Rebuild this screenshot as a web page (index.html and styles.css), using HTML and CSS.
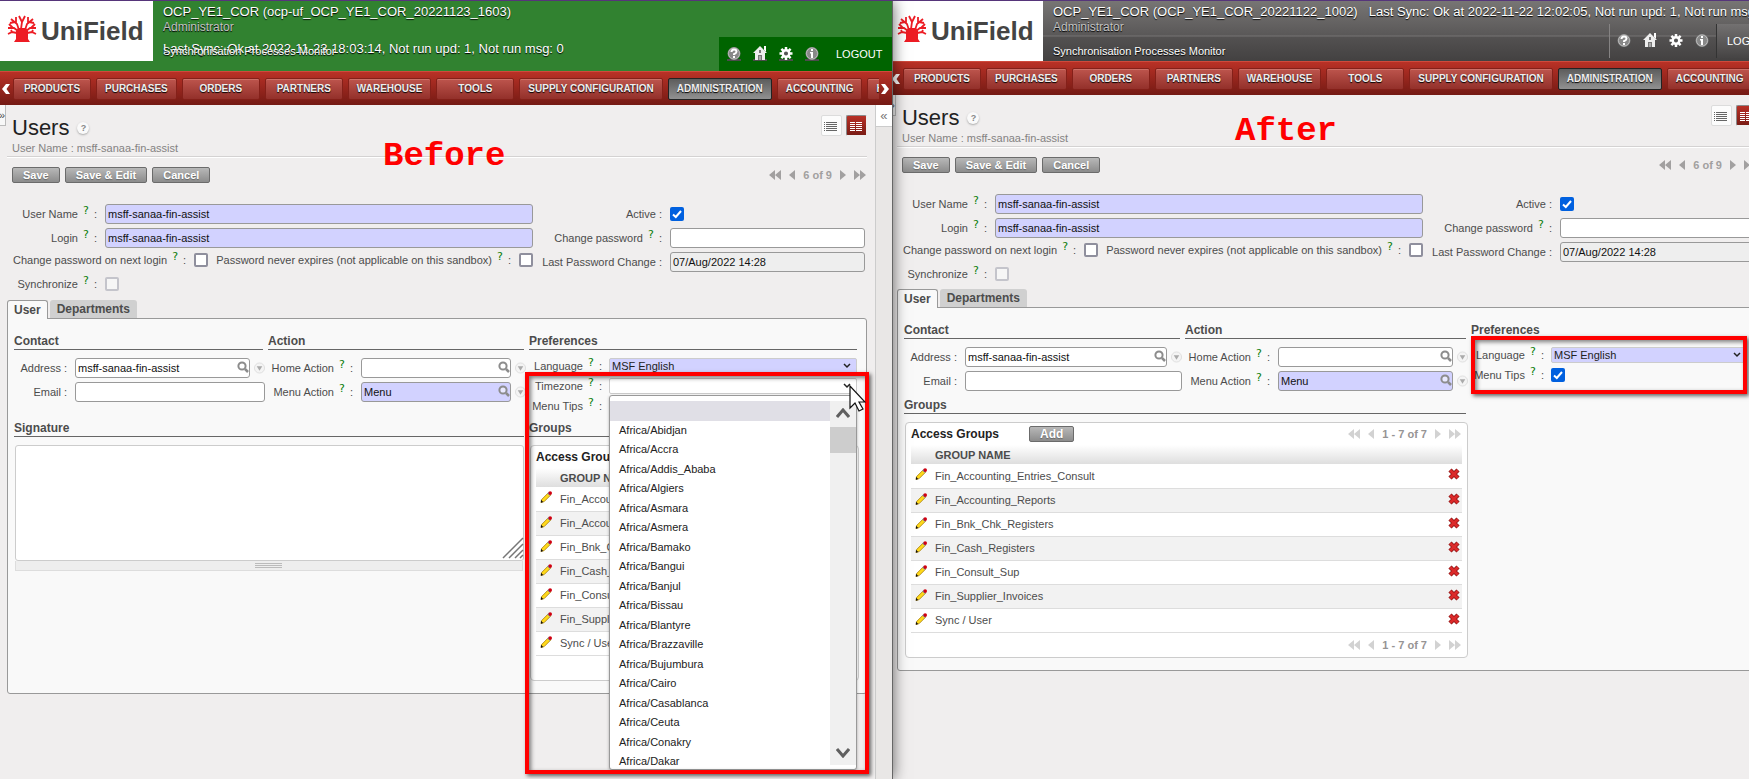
FILE: index.html
```html
<!DOCTYPE html>
<html lang="en">
<head>
    <meta charset="UTF-8">
    <meta name="viewport" content="width=device-width, initial-scale=1.0">
    <title>UniField - Users</title>
    <link rel="stylesheet" href="styles.css">
</head>
<body>
    <!-- shared icons -->
    <svg class="icon-defs" aria-hidden="true">
        <symbol id="tree" viewBox="0 0 30 27">
            <path fill="#ed1c24" d="M9 24 L9 16 L11 13 L19 13 L21 16 L21 24 L23 27 L7 27Z"/>
            <g fill="none" stroke="#ed1c24" stroke-width="1.800">
                <path d="M11 16 L7 13 L1 13 M6 13 L2 9 M12 15 L10 9 L4 4 M8 7 L3 8 M9 8 L9 2 M14 14 L15 7 L12 1 M15 7 L18 1 M18 15 L20 9 L26 4 M22 7 L27 8 M21 8 L21 2 M19 16 L23 13 L29 13 M24 13 L28 9 M10 18 L5 17 L1 19 M5 17 L4 15 M20 18 L25 17 L29 19 M25 17 L26 15"/>
            </g>
        </symbol>
        <symbol id="ico-help" viewBox="0 0 16 16">
            <rect x="1" y="13" width="14" height="2" fill="#4c4c4c"/>
            <circle cx="8" cy="7.500" r="6.500" fill="#888"/>
            <circle cx="8" cy="7.500" r="5.500" fill="none" stroke="#bbb"/>
            <path d="M5.500 6 Q5.500 3.500 8 3.500 T10.500 5.800 Q10.500 7.200 8 8.200 V9" fill="none" stroke="#fff" stroke-width="2"/>
            <rect x="7" y="10" width="2" height="2" fill="#fff"/>
        </symbol>
        <symbol id="ico-home" viewBox="0 0 16 16">
            <rect x="1" y="13" width="14" height="2" fill="#4c4c4c"/>
            <path d="M1 7 L8 0 L15 7 L13 7 L13 14 L3 14 L3 7Z" fill="#eee"/>
            <path d="M12 0 H14 V6 L12 4Z" fill="#fff"/>
            <path d="M7 4 H9 V7 H7Z M6 9 H10 V14 H6Z" fill="#777"/>
            <path d="M8 10 V14" stroke="#ddd" stroke-width="1"/>
        </symbol>
        <symbol id="ico-gear" viewBox="0 0 16 16">
            <rect x="1" y="13" width="14" height="2" fill="#4c4c4c"/>
            <path d="M8 1 V14 M1.500 7.500 H14.500 M3.400 2.900 L12.600 12.100 M12.600 2.900 L3.400 12.100" stroke="#fff" stroke-width="2.500"/>
            <circle cx="8" cy="7.500" r="3.300" fill="#555" stroke="#fff" stroke-width="2.500"/>
        </symbol>
        <symbol id="ico-info" viewBox="0 0 16 16">
            <rect x="1" y="13" width="14" height="2" fill="#4c4c4c"/>
            <circle cx="8" cy="7.500" r="6.500" fill="#888"/>
            <circle cx="8" cy="7.500" r="5.500" fill="none" stroke="#bbb"/>
            <path d="M7 3 H9 V5 H7Z M6 6 H9 V12 H7 V7.500 H6Z" fill="#fff"/>
        </symbol>
        <symbol id="ico-list" viewBox="0 0 14 12">
            <path d="M0 2.500 H1 M0 4.500 H1 M0 6.500 H1 M0 8.500 H1 M0 10.500 H1 M2 2.500 H13 M2 4.500 H13 M2 6.500 H13 M2 8.500 H13 M2 10.500 H13" stroke="currentColor"/>
        </symbol>
        <symbol id="ico-form" viewBox="0 0 14 12">
            <path d="M1 2.500 H6 M1 4.500 H6 M1 6.500 H6 M1 8.500 H6 M1 10.500 H6 M7 2.500 H13 M7 4.500 H13 M7 6.500 H13 M7 8.500 H13 M7 10.500 H13" stroke="currentColor"/>
        </symbol>
        <symbol id="ico-first" viewBox="0 0 12 10">
            <path d="M6 0 V10 L0 5Z M12 0 V10 L6 5Z" fill="currentColor"/>
        </symbol>
        <symbol id="ico-prev" viewBox="0 0 6 10">
            <path d="M6 0 V10 L0 5Z" fill="currentColor"/>
        </symbol>
        <symbol id="ico-next" viewBox="0 0 6 10">
            <path d="M0 0 V10 L6 5Z" fill="currentColor"/>
        </symbol>
        <symbol id="ico-last" viewBox="0 0 12 10">
            <path d="M0 0 V10 L6 5Z M6 0 V10 L12 5Z" fill="currentColor"/>
        </symbol>
        <symbol id="ico-search" viewBox="0 0 12 12">
            <circle cx="5" cy="5" r="3.600" fill="#fff" fill-opacity=".5" stroke="#8c8c8c" stroke-width="2"/>
            <path d="M8 8 L11 11" stroke="#8c8c8c" stroke-width="2.500"/>
        </symbol>
        <symbol id="ico-open" viewBox="0 0 12 12">
            <circle cx="6" cy="6" r="5.500" fill="#f4f4f4" stroke="#ddd"/>
            <path d="M3 4 H9 L6 9Z" fill="#aaa"/>
        </symbol>
        <symbol id="ico-edit" viewBox="0 0 13 13">
            <path d="M2 9 L9 2 L11.500 4.500 L4.500 11.500 L1 12.500Z" fill="#ffd91a" stroke="#a07400" stroke-width=".8"/>
            <path d="M1 9.500 L3.500 12 L1 12.800Z" fill="#111"/>
            <path d="M8.500 2 L11 4.500" stroke="#5aa5e8" stroke-width="1.500"/>
            <circle cx="11" cy="2.200" r="2" fill="#d00010"/>
        </symbol>
        <symbol id="ico-delete" viewBox="0 0 12 12">
            <path d="M2 2 L10 10 M10 2 L2 10" stroke="#8e1515" stroke-width="4.500"/>
            <path d="M2.200 2.200 L9.800 9.800 M9.800 2.200 L2.200 9.800" stroke="#dc2a2a" stroke-width="2.800"/>
        </symbol>
        <symbol id="ico-left" viewBox="0 0 8 10">
            <path d="M0 5 L4 0 H8 L4.500 5 L8 10 H4Z" fill="#fff"/>
        </symbol>
        <symbol id="ico-right" viewBox="0 0 8 10">
            <path d="M8 5 L4 0 H0 L3.500 5 L0 10 H4Z" fill="#fff"/>
        </symbol>
    </svg>

    <!-- Before -->
    <div class="window window-before">
        <header class="header header-green">
            <a class="logo" href="#"><svg class="logo-tree"><use href="#tree"/></svg>UniField</a>
            <div class="header-info">
                <div class="db-line"><span>OCP_YE1_COR (ocp-uf_OCP_YE1_COR_20221123_1603)</span></div>
                <div class="role">Administrator</div>
                <div class="sync-line">
                    <span class="last-sync">Last Sync: Ok at 2022-11-23 18:03:14, Not run upd: 1, Not run msg: 0</span>
                    <a class="monitor" href="#">Synchronisation Processes Monitor</a>
                </div>
            </div>
            <div class="shortcuts">
                <a href="#" aria-label="Help"><svg><use href="#ico-help"/></svg></a>
                <a href="#" aria-label="Home"><svg><use href="#ico-home"/></svg></a>
                <a href="#" aria-label="Preferences"><svg><use href="#ico-gear"/></svg></a>
                <a href="#" aria-label="About"><svg><use href="#ico-info"/></svg></a>
                <a class="logout" href="#">LOGOUT</a>
            </div>
        </header>
        <nav class="menu">
            <button class="menu-arrow" aria-label="Scroll left"><svg><use href="#ico-left"/></svg></button>
            <div class="menu-items">
                <a href="#">PRODUCTS</a>
                <a href="#">PURCHASES</a>
                <a href="#">ORDERS</a>
                <a href="#">PARTNERS</a>
                <a href="#">WAREHOUSE</a>
                <a href="#">TOOLS</a>
                <a href="#">SUPPLY CONFIGURATION</a>
                <a class="active" href="#">ADMINISTRATION</a>
                <a href="#">ACCOUNTING</a>
                <a href="#">HUMAN RESOURCES</a>
            </div>
            <button class="menu-arrow" aria-label="Scroll right"><svg><use href="#ico-right"/></svg></button>
        </nav>
        <div class="page">
            <button class="toggle-left" aria-label="Open menu">»</button>
            <main class="content">
                <div class="title-bar">
                    <div>
                        <h1>Users <a class="title-help" href="#">?</a></h1>
                        <p class="subtitle">User Name : msff-sanaa-fin-assist</p>
                    </div>
                    <div class="views">
                        <button class="view" aria-label="List view"><svg><use href="#ico-list"/></svg></button>
                        <button class="view active" aria-label="Form view"><svg><use href="#ico-form"/></svg></button>
                    </div>
                </div>
                <div class="toolbar">
                    <button class="btn">Save</button>
                    <button class="btn">Save &amp; Edit</button>
                    <button class="btn">Cancel</button>
                    <div class="pager">
                        <svg class="wide"><use href="#ico-first"/></svg><svg><use href="#ico-prev"/></svg>
                        <span>6 of 9</span>
                        <svg><use href="#ico-next"/></svg><svg class="wide"><use href="#ico-last"/></svg>
                    </div>
                </div>
                <div class="user-form">
                    <div class="form-main">
                        <div class="row"><label for="b-name">User Name <sup>?</sup> :</label><input class="text required" id="b-name" type="text" value="msff-sanaa-fin-assist"></div>
                        <div class="row"><label for="b-login">Login <sup>?</sup> :</label><input class="text required" id="b-login" type="text" value="msff-sanaa-fin-assist"></div>
                        <div class="row row-checks">
                            <label for="b-next">Change password on next login <sup>?</sup> :</label><input id="b-next" type="checkbox">
                            <label for="b-never">Password never expires (not applicable on this sandbox) <sup>?</sup> :</label><input id="b-never" type="checkbox">
                        </div>
                        <div class="row row-sync"><label for="b-sync">Synchronize <sup>?</sup> :</label><input id="b-sync" type="checkbox" disabled></div>
                    </div>
                    <div class="form-side">
                        <div class="row"><label for="b-active">Active :</label><input id="b-active" type="checkbox" checked></div>
                        <div class="row"><label for="b-pass">Change password <sup>?</sup> :</label><input class="text" id="b-pass" type="password"></div>
                        <div class="row"><label for="b-last">Last Password Change :</label><input class="text readonly" id="b-last" type="text" value="07/Aug/2022 14:28" readonly></div>
                    </div>
                </div>
                <div class="tabs">
                    <button class="tab active">User</button>
                    <button class="tab">Departments</button>
                </div>
                <div class="panel">
                    <section class="contact">
                        <h2>Contact</h2>
                        <div class="row"><label for="b-address">Address :</label><span class="lookup"><input class="text" id="b-address" type="text" value="msff-sanaa-fin-assist"><svg class="search"><use href="#ico-search"/></svg></span><svg class="open"><use href="#ico-open"/></svg></div>
                        <div class="row"><label for="b-email">Email :</label><input class="text" id="b-email" type="text"></div>
                    </section>
                    <section class="action">
                        <h2>Action</h2>
                        <div class="row"><label for="b-home">Home Action <sup>?</sup> :</label><span class="lookup"><input class="text" id="b-home" type="text"><svg class="search"><use href="#ico-search"/></svg></span><svg class="open"><use href="#ico-open"/></svg></div>
                        <div class="row"><label for="b-menu">Menu Action <sup>?</sup> :</label><span class="lookup"><input class="text required" id="b-menu" type="text" value="Menu"><svg class="search"><use href="#ico-search"/></svg></span><svg class="open"><use href="#ico-open"/></svg></div>
                    </section>
                    <section class="preferences">
                        <h2>Preferences</h2>
                        <div class="row"><label for="b-lang">Language <sup>?</sup> :</label><select class="required" id="b-lang"><option>MSF English</option></select></div>
                        <div class="row">
                            <label for="b-tz">Timezone <sup>?</sup> :</label>
                            <div class="select-open">
                                <select id="b-tz"><option></option></select>
                                <div class="dropdown">
                                    <ul>
                                        <li class="selected"></li>
                                        <li>Africa/Abidjan</li>
                                        <li>Africa/Accra</li>
                                        <li>Africa/Addis_Ababa</li>
                                        <li>Africa/Algiers</li>
                                        <li>Africa/Asmara</li>
                                        <li>Africa/Asmera</li>
                                        <li>Africa/Bamako</li>
                                        <li>Africa/Bangui</li>
                                        <li>Africa/Banjul</li>
                                        <li>Africa/Bissau</li>
                                        <li>Africa/Blantyre</li>
                                        <li>Africa/Brazzaville</li>
                                        <li>Africa/Bujumbura</li>
                                        <li>Africa/Cairo</li>
                                        <li>Africa/Casablanca</li>
                                        <li>Africa/Ceuta</li>
                                        <li>Africa/Conakry</li>
                                        <li>Africa/Dakar</li>
                                    </ul>
                                    <div class="scrollbar">
                                        <svg viewBox="0 0 14 10"><path d="M1 9 L7 2 L13 9" fill="none" stroke="#606060" stroke-width="3"/></svg>
                                        <div class="thumb"></div>
                                        <svg viewBox="0 0 14 10"><path d="M1 1 L7 8 L13 1" fill="none" stroke="#606060" stroke-width="3"/></svg>
                                    </div>
                                </div>
                                <svg class="cursor" viewBox="0 0 17 27"><path d="M1 1 V23 L6 18 L10 26 L14 24 L10 17 H16Z" fill="#fff" stroke="#111" stroke-width="1.200"/></svg>
                            </div>
                        </div>
                        <div class="row"><label for="b-tips">Menu Tips <sup>?</sup> :</label><input id="b-tips" type="checkbox" checked></div>
                        <div class="highlight"></div>
                    </section>
                    <section class="signature">
                        <h2><label for="b-sign">Signature</label></h2>
                        <div class="sign-box">
                            <textarea id="b-sign"></textarea>
                            <svg class="resize" viewBox="0 0 22 22"><path d="M1 21 L21 1 M7 21 L21 7 M13 21 L21 13 M18 21 L21 18" stroke="#777" stroke-width="1.500"/></svg>
                        </div>
                        <div class="grippie"><span></span></div>
                    </section>
                    <section class="groups">
                        <h2>Groups</h2>
                        <div class="group-box">
                            <div class="group-head"><strong>Access Groups</strong></div>
                            <table>
                                <thead><tr><th class="col-icon"></th><th>GROUP NAME</th><th class="col-icon"></th></tr></thead>
                                <tbody>
                                    <tr><td><svg><use href="#ico-edit"/></svg></td><td>Fin_Accounting_Entries_Consult</td><td></td></tr>
                                    <tr><td><svg><use href="#ico-edit"/></svg></td><td>Fin_Accounting_Reports</td><td></td></tr>
                                    <tr><td><svg><use href="#ico-edit"/></svg></td><td>Fin_Bnk_Chk_Registers</td><td></td></tr>
                                    <tr><td><svg><use href="#ico-edit"/></svg></td><td>Fin_Cash_Registers</td><td></td></tr>
                                    <tr><td><svg><use href="#ico-edit"/></svg></td><td>Fin_Consult_Sup</td><td></td></tr>
                                    <tr><td><svg><use href="#ico-edit"/></svg></td><td>Fin_Supplier_Invoices</td><td></td></tr>
                                    <tr><td><svg><use href="#ico-edit"/></svg></td><td>Sync / User</td><td></td></tr>
                                </tbody>
                            </table>
                            <div class="group-foot"></div>
                        </div>
                    </section>
                </div>
            </main>
            <aside class="sidebar"><button aria-label="Open sidebar">«</button></aside>
        </div>
        <div class="caption">Before</div>
    </div>

    <!-- After -->
    <div class="window window-after">
        <header class="header header-gray">
            <a class="logo" href="#"><svg class="logo-tree"><use href="#tree"/></svg>UniField</a>
            <div class="header-info">
                <div class="db-line">
                    <span>OCP_YE1_COR (OCP_YE1_COR_20221122_1002)</span>
                    <span>Last Sync: Ok at 2022-11-22 12:02:05, Not run upd: 1, Not run msg: 0</span>
                </div>
                <div class="role">Administrator</div>
                <div class="sync-line"><a class="monitor" href="#">Synchronisation Processes Monitor</a></div>
            </div>
            <div class="shortcuts">
                <a href="#" aria-label="Help"><svg><use href="#ico-help"/></svg></a>
                <a href="#" aria-label="Home"><svg><use href="#ico-home"/></svg></a>
                <a href="#" aria-label="Preferences"><svg><use href="#ico-gear"/></svg></a>
                <a href="#" aria-label="About"><svg><use href="#ico-info"/></svg></a>
                <a class="logout" href="#">LOGOUT</a>
            </div>
        </header>
        <nav class="menu">
            <button class="menu-arrow" aria-label="Scroll left"><svg><use href="#ico-left"/></svg></button>
            <div class="menu-items">
                <a href="#">PRODUCTS</a>
                <a href="#">PURCHASES</a>
                <a href="#">ORDERS</a>
                <a href="#">PARTNERS</a>
                <a href="#">WAREHOUSE</a>
                <a href="#">TOOLS</a>
                <a href="#">SUPPLY CONFIGURATION</a>
                <a class="active" href="#">ADMINISTRATION</a>
                <a href="#">ACCOUNTING</a>
            </div>
        </nav>
        <div class="page">
            <button class="toggle-left" aria-label="Open menu">»</button>
            <main class="content">
                <div class="title-bar">
                    <div>
                        <h1>Users <a class="title-help" href="#">?</a></h1>
                        <p class="subtitle">User Name : msff-sanaa-fin-assist</p>
                    </div>
                    <div class="views">
                        <button class="view" aria-label="List view"><svg><use href="#ico-list"/></svg></button>
                        <button class="view active" aria-label="Form view"><svg><use href="#ico-form"/></svg></button>
                    </div>
                </div>
                <div class="toolbar">
                    <button class="btn">Save</button>
                    <button class="btn">Save &amp; Edit</button>
                    <button class="btn">Cancel</button>
                    <div class="pager">
                        <svg class="wide"><use href="#ico-first"/></svg><svg><use href="#ico-prev"/></svg>
                        <span>6 of 9</span>
                        <svg><use href="#ico-next"/></svg><svg class="wide"><use href="#ico-last"/></svg>
                    </div>
                </div>
                <div class="user-form">
                    <div class="form-main">
                        <div class="row"><label for="a-name">User Name <sup>?</sup> :</label><input class="text required" id="a-name" type="text" value="msff-sanaa-fin-assist"></div>
                        <div class="row"><label for="a-login">Login <sup>?</sup> :</label><input class="text required" id="a-login" type="text" value="msff-sanaa-fin-assist"></div>
                        <div class="row row-checks">
                            <label for="a-next">Change password on next login <sup>?</sup> :</label><input id="a-next" type="checkbox">
                            <label for="a-never">Password never expires (not applicable on this sandbox) <sup>?</sup> :</label><input id="a-never" type="checkbox">
                        </div>
                        <div class="row row-sync"><label for="a-sync">Synchronize <sup>?</sup> :</label><input id="a-sync" type="checkbox" disabled></div>
                    </div>
                    <div class="form-side">
                        <div class="row"><label for="a-active">Active :</label><input id="a-active" type="checkbox" checked></div>
                        <div class="row"><label for="a-pass">Change password <sup>?</sup> :</label><input class="text" id="a-pass" type="password"></div>
                        <div class="row"><label for="a-last">Last Password Change :</label><input class="text readonly" id="a-last" type="text" value="07/Aug/2022 14:28" readonly></div>
                    </div>
                </div>
                <div class="tabs">
                    <button class="tab active">User</button>
                    <button class="tab">Departments</button>
                </div>
                <div class="panel">
                    <section class="contact">
                        <h2>Contact</h2>
                        <div class="row"><label for="a-address">Address :</label><span class="lookup"><input class="text" id="a-address" type="text" value="msff-sanaa-fin-assist"><svg class="search"><use href="#ico-search"/></svg></span><svg class="open"><use href="#ico-open"/></svg></div>
                        <div class="row"><label for="a-email">Email :</label><input class="text" id="a-email" type="text"></div>
                    </section>
                    <section class="action">
                        <h2>Action</h2>
                        <div class="row"><label for="a-home">Home Action <sup>?</sup> :</label><span class="lookup"><input class="text" id="a-home" type="text"><svg class="search"><use href="#ico-search"/></svg></span><svg class="open"><use href="#ico-open"/></svg></div>
                        <div class="row"><label for="a-menu">Menu Action <sup>?</sup> :</label><span class="lookup"><input class="text required" id="a-menu" type="text" value="Menu"><svg class="search"><use href="#ico-search"/></svg></span><svg class="open"><use href="#ico-open"/></svg></div>
                    </section>
                    <section class="preferences">
                        <h2>Preferences</h2>
                        <div class="row"><label for="a-lang">Language <sup>?</sup> :</label><select class="required" id="a-lang"><option>MSF English</option></select></div>
                        <div class="row"><label for="a-tips">Menu Tips <sup>?</sup> :</label><input id="a-tips" type="checkbox" checked></div>
                        <div class="highlight"></div>
                    </section>
                    <section class="groups">
                        <h2>Groups</h2>
                        <div class="group-box">
                            <div class="group-head">
                                <strong>Access Groups</strong>
                                <button class="btn">Add</button>
                                <div class="pager pager-off">
                                    <svg class="wide"><use href="#ico-first"/></svg><svg><use href="#ico-prev"/></svg>
                                    <span>1 - 7 of 7</span>
                                    <svg><use href="#ico-next"/></svg><svg class="wide"><use href="#ico-last"/></svg>
                                </div>
                            </div>
                            <table>
                                <thead><tr><th class="col-icon"></th><th>GROUP NAME</th><th class="col-icon"></th></tr></thead>
                                <tbody>
                                    <tr><td><svg><use href="#ico-edit"/></svg></td><td>Fin_Accounting_Entries_Consult</td><td><svg><use href="#ico-delete"/></svg></td></tr>
                                    <tr><td><svg><use href="#ico-edit"/></svg></td><td>Fin_Accounting_Reports</td><td><svg><use href="#ico-delete"/></svg></td></tr>
                                    <tr><td><svg><use href="#ico-edit"/></svg></td><td>Fin_Bnk_Chk_Registers</td><td><svg><use href="#ico-delete"/></svg></td></tr>
                                    <tr><td><svg><use href="#ico-edit"/></svg></td><td>Fin_Cash_Registers</td><td><svg><use href="#ico-delete"/></svg></td></tr>
                                    <tr><td><svg><use href="#ico-edit"/></svg></td><td>Fin_Consult_Sup</td><td><svg><use href="#ico-delete"/></svg></td></tr>
                                    <tr><td><svg><use href="#ico-edit"/></svg></td><td>Fin_Supplier_Invoices</td><td><svg><use href="#ico-delete"/></svg></td></tr>
                                    <tr><td><svg><use href="#ico-edit"/></svg></td><td>Sync / User</td><td><svg><use href="#ico-delete"/></svg></td></tr>
                                </tbody>
                            </table>
                            <div class="group-foot">
                                <div class="pager pager-off">
                                    <svg class="wide"><use href="#ico-first"/></svg><svg><use href="#ico-prev"/></svg>
                                    <span>1 - 7 of 7</span>
                                    <svg><use href="#ico-next"/></svg><svg class="wide"><use href="#ico-last"/></svg>
                                </div>
                            </div>
                        </div>
                    </section>
                </div>
            </main>
            <aside class="sidebar"><button aria-label="Open sidebar">«</button></aside>
        </div>
        <div class="caption">After</div>
    </div>
</body>
</html>
```
FILE: styles.css
```css
* {
    margin: 0;
    padding: 0;
    box-sizing: border-box;
}

body {
    display: flex;
    height: 100vh;
    overflow: hidden;
    border-top: 1px solid #56357a;
    background: #f0eeee;
    color: #4c4c4c;
    font-family: "Liberation Sans", Arial, sans-serif;
    font-size: 11px;
    line-height: 14px;
}

a {
    color: inherit;
    text-decoration: none;
}

button,
input,
select,
textarea {
    font: inherit;
    color: inherit;
}

button {
    border: none;
    background: none;
    cursor: pointer;
}

svg {
    display: block;
    flex: none;
}

.icon-defs {
    position: absolute;
    width: 0;
    height: 0;
}

.window {
    box-sizing: content-box;
    position: relative;
    flex: 0 0 51%;
    display: flex;
    flex-direction: column;
    overflow: hidden;
    background: #f0eeee;
    border-right: 1px solid #666;
}

.window-before {
    z-index: 2;
    box-shadow: 0 0 14px rgba(0, 0, 0, 0.6);
}

.window-after {
    margin-left: -3px;
}

/* Header */
.header {
    display: flex;
    flex: none;
    color: #fff;
}

.header-green {
    height: 70px;
    background: #318230;
}

.header-gray {
    height: 60px;
    background: linear-gradient(#777574 0, #5a5858 34px, #757373 35px, #535151 36px, #434141 100%);
}

.logo {
    display: flex;
    align-items: center;
    flex: none;
    gap: 4px;
    width: 153px;
    height: 60px;
    padding-left: 7px;
    background: #fff;
    color: #444;
    font-size: 26px;
    font-weight: bold;
}

.logo-tree {
    width: 30px;
    height: 27px;
    margin-bottom: 6px;
}

.header-info {
    flex: 1;
    min-width: 0;
    padding: 3px 0 0 10px;
    white-space: nowrap;
    text-shadow: 0 1px 1px #000;
}

.db-line {
    display: flex;
    gap: 11px;
    font-size: 13px;
    line-height: 16px;
}

.role {
    color: #c2c2c2;
    font-size: 12px;
}

/* both texts share one cell */
.sync-line {
    display: grid;
    align-items: end;
    margin-top: 8px;
    height: 16px;
}

.last-sync,
.monitor {
    grid-area: 1 / 1;
}

.last-sync {
    align-self: start;
    font-size: 13px;
}

.shortcuts {
    display: flex;
    align-items: center;
    align-self: flex-end;
    flex: none;
    gap: 10px;
    height: 34px;
    width: 173px;
    padding-left: 7px;
}

.shortcuts svg {
    width: 16px;
    height: 16px;
}

.header-green .shortcuts {
    background: #006400;
}

.header-gray .shortcuts {
    align-self: flex-start;
    margin-top: 23px;
    padding-left: 6px;
    border-left: 1px solid #858383;
}

.logout {
    display: flex;
    align-items: center;
    height: 34px;
    padding-left: 6px;
}

.header-gray .logout {
    flex: 1;
    margin-left: -4px;
    padding-left: 10px;
    border-left: 1px solid #333;
    background: linear-gradient(#737171, #464444);
}

/* Main menu */
.menu {
    display: flex;
    align-items: center;
    flex: none;
    height: 34px;
    background: linear-gradient(#b93126, #741a14);
    border-top: 1px solid #cf4a3c;
}

.menu-arrow {
    width: 13px;
    padding-left: 2px;
}

.menu-arrow svg {
    width: 8px;
    height: 10px;
}

.menu-items {
    display: flex;
    flex: 1;
    gap: 5px;
    overflow: hidden;
}

.menu-items a {
    flex: none;
    min-width: 78px;
    padding: 0 8px;
    border: 1px solid #842019;
    border-radius: 2px;
    background: linear-gradient(#bd554d, #93302a);
    box-shadow: inset 0 1px 0 #cd6f67;
    color: #f0eeee;
    font-size: 10px;
    font-weight: bold;
    line-height: 20px;
    text-align: center;
    text-shadow: 0 1px 1px #000;
}

.menu-items a.active {
    border-color: #222;
    background: linear-gradient(#5c5c5c, #919191);
    box-shadow: none;
}

/* Page */
.page {
    position: relative;
    display: flex;
    flex: 1;
    min-height: 0;
}

.toggle-left {
    position: absolute;
    top: 0;
    left: 0;
    display: flex;
    align-items: center;
    justify-content: flex-end;
    width: 6px;
    height: 21px;
    background: #f8f8f8;
    border: solid #bbb;
    border-width: 0 1px 1px 0;
}

.sidebar {
    flex: none;
    width: 17px;
    border-left: 1px solid #ccc;
    background: #e9e7e6;
}

.sidebar button {
    width: 16px;
    height: 22px;
    background: #fff;
    border-bottom: 1px solid #ccc;
    color: #777;
    font-size: 13px;
}

.content {
    flex: 1;
    min-width: 0;
    padding: 10px 8px 0 7px;
}

.title-bar {
    display: flex;
    justify-content: space-between;
    padding-left: 5px;
    border-bottom: 1px solid #d4d2d2;
    box-shadow: 0 1px 0 #fff;
}

h1 {
    display: flex;
    align-items: center;
    gap: 8px;
    color: #222;
    font-size: 22px;
    font-weight: normal;
    line-height: 26px;
}

.title-help {
    width: 12px;
    height: 12px;
    border-radius: 50%;
    background: #fafafa;
    box-shadow: 0 1px 2px #aaa;
    color: #888;
    font-size: 9px;
    font-weight: bold;
    line-height: 12px;
    text-align: center;
}

.subtitle {
    padding-bottom: 1px;
    color: #848282;
}

.views {
    display: flex;
    gap: 4px;
}

.view {
    display: flex;
    align-items: center;
    justify-content: center;
    width: 21px;
    height: 21px;
    border: 1px solid #dcdcdc;
    border-radius: 2px;
    background: #fcfcfc;
    color: #666;
}

.view.active {
    border-color: #8a8a8a #eee #eee #8a8a8a;
    background: linear-gradient(#b83026, #7a1c15);
    color: #fff;
}

.view svg {
    width: 14px;
    height: 12px;
}

.toolbar {
    display: flex;
    align-items: center;
    gap: 5px;
    margin: 10px 0 19px;
    padding-left: 5px;
}

.btn {
    height: 16px;
    padding: 0 10px;
    border: 1px solid #6b6b6b;
    border-radius: 2px;
    background: linear-gradient(#b8b8b8, #8c8c8c);
    color: #fff;
    font-weight: bold;
    text-shadow: 0 1px 1px #666;
}

.pager {
    display: flex;
    align-items: center;
    gap: 8px;
    margin-left: auto;
    padding-right: 1px;
    color: #a2a0a0;
    font-weight: bold;
}

.pager svg {
    width: 6px;
    height: 10px;
}

.pager svg.wide {
    width: 12px;
}

.pager-off svg {
    color: #d2d2d2;
}

/* Form */
.user-form {
    display: grid;
    grid-template-columns: 520fr 323fr;
    gap: 9px;
    padding: 0 2px 0 6px;
}

.row {
    display: flex;
    align-items: center;
    gap: 8px;
    height: 24px;
}

.row label {
    flex: none;
    text-align: right;
    white-space: nowrap;
}

.form-main .row label {
    width: 84px;
}

.form-main .row-checks {
    justify-content: space-between;
    height: 20px;
}

.form-main .row-checks label {
    width: auto;
}

.form-main .row-sync {
    height: 28px;
}

.form-side .row label {
    width: 120px;
}

sup {
    margin: 0 2px;
    color: #0a7d0a;
    font-family: "DejaVu Sans", sans-serif;
    font-size: 11px;
    line-height: 0;
    vertical-align: 4px;
}

.text {
    flex: 1;
    width: 100%;
    min-width: 0;
    height: 20px;
    padding: 0 2px;
    border: 1px solid #999;
    border-radius: 3px;
    background: #fff;
    color: #111;
    outline: none;
}

.text.required,
select.required {
    background-color: #d2d2ff;
}

.text.readonly {
    background: #eee;
}

input[type="checkbox"] {
    appearance: none;
    flex: none;
    width: 14px;
    height: 14px;
    border: 2px solid #8f8f9d;
    border-radius: 2px;
    background: #fff;
}

input[type="checkbox"]:checked {
    border: none;
    background: #0060df url("data:image/svg+xml,%3Csvg xmlns='http://www.w3.org/2000/svg' viewBox='0 0 14 14'%3E%3Cpath d='M3 7.500 L5.800 10 L11 4' fill='none' stroke='white' stroke-width='2'/%3E%3C/svg%3E");
}

input[type="checkbox"]:disabled {
    border-color: #c4c4cb;
    background: #f6f6f6;
}

select {
    appearance: none;
    flex: 1;
    width: 100%;
    height: 16px;
    padding: 0 2px;
    border: 1px solid #ccc;
    border-radius: 2px;
    background: #fff url("data:image/svg+xml,%3Csvg xmlns='http://www.w3.org/2000/svg' width='8' height='6' viewBox='0 0 8 6'%3E%3Cpath d='M1 1 L4 4 L7 1' fill='none' stroke='%23222' stroke-width='1.500'/%3E%3C/svg%3E") no-repeat right 5px center;
    color: #222;
}

/* Tabs */
.tabs {
    display: flex;
    gap: 2px;
    margin-top: 2px;
}

.window-after .tabs {
    margin-top: 1px;
}

.tab {
    height: 18px;
    padding: 0 7px;
    border-radius: 3px 3px 0 0;
    background: #d0d0d0;
    font-size: 12px;
    font-weight: bold;
}

.tab.active {
    height: 19px;
    margin-bottom: -1px;
    padding: 0 6px;
    border: 1px solid #999;
    border-bottom: none;
    background: #f9f9f9;
    z-index: 1;
}

.panel {
    display: grid;
    row-gap: 4px;
    column-gap: 5px;
    padding: 14px 9px 12px 6px;
    border: 1px solid #999;
    border-radius: 0 3px 3px 3px;
    background: #f9f9f9;
}

.window-before .panel {
    grid-template-columns: 249fr 256fr 328fr;
}

.window-after .panel {
    grid-template-columns: 276fr 281fr 276fr;
}

section {
    min-width: 0;
}

h2 {
    height: 17px;
    margin-bottom: 6px;
    border-bottom: 1px solid #666;
    font-size: 12px;
    line-height: 17px;
}

.contact .row label {
    width: 53px;
}

.action .row label {
    width: 85px;
}

.contact .row,
.action .row {
    gap: 4px;
    margin-right: -2px;
}

.contact label,
.action label {
    margin-right: 4px;
}

.lookup {
    position: relative;
    display: flex;
    flex: 1;
    min-width: 0;
}

.search {
    position: absolute;
    top: 3px;
    right: 1px;
    width: 12px;
    height: 12px;
}

.open {
    width: 11px;
    height: 12px;
}

.preferences {
    position: relative;
}

.preferences .row {
    gap: 7px;
    height: 20px;
}

.preferences .row label {
    width: 73px;
}

.select-open {
    position: relative;
    display: flex;
    flex: 1;
}

.dropdown {
    position: absolute;
    top: 17px;
    left: 0;
    right: 0;
    z-index: 3;
    display: flex;
    height: 375px;
    padding: 5px 0 4px;
    border: 1px solid #999;
    border-radius: 3px;
    background: #fff;
    color: #222;
    box-shadow: 0 1px 3px rgba(0, 0, 0, 0.3);
}

.dropdown ul {
    flex: 1;
    overflow: hidden;
    list-style: none;
}

.dropdown li {
    height: 19px;
    padding-left: 9px;
    line-height: 19px;
}

.dropdown li:nth-child(odd) {
    height: 20px;
}

.dropdown li.selected {
    background: #e0dfe6;
}

.scrollbar {
    display: flex;
    flex-direction: column;
    align-items: center;
    width: 26px;
    padding: 7px 0;
    background: #f0f0f0;
}

.scrollbar svg {
    width: 14px;
    height: 10px;
}

.thumb {
    width: 26px;
    height: 26px;
    margin: 9px 0 auto;
    background: #cdcdcd;
}

.cursor {
    position: absolute;
    top: 7px;
    right: -9px;
    z-index: 4;
    width: 17px;
    height: 27px;
}

.highlight {
    position: absolute;
    z-index: 3;
    border: 4px solid #f00;
    box-shadow: 2px 2px 4px rgba(0, 0, 0, 0.6), inset 2px 2px 4px rgba(0, 0, 0, 0.5);
    pointer-events: none;
}

.window-before .highlight {
    top: 39px;
    left: -4px;
    right: -12px;
    height: 402px;
}

.window-after .highlight {
    top: 14px;
    left: 0;
    right: 0;
    height: 58px;
}

.signature,
.window-after .groups {
    grid-column: 1 / 3;
}

.window-before .groups {
    grid-column: 3;
}

.sign-box {
    position: relative;
    display: flex;
    margin: 8px 0 0 1px;
}

textarea {
    flex: 1;
    height: 116px;
    border: 1px solid #ccc;
    border-radius: 3px;
    resize: none;
    outline: none;
}

.resize {
    position: absolute;
    right: 0;
    bottom: 2px;
    width: 22px;
    height: 22px;
}

.grippie {
    display: flex;
    align-items: center;
    justify-content: center;
    height: 10px;
    margin: 0 1px;
    border: 1px solid #ddd;
    border-top: none;
    background: #eee;
}

.grippie span {
    width: 27px;
    height: 5px;
    background: repeating-linear-gradient(#bbb 0 1px, #eee 1px 2px);
}

/* Access groups list */
.group-box {
    margin: 8px -2px 0 1px;
    padding: 0 5px;
    border: 1px solid #ccc;
    border-radius: 4px;
    background: #fff;
}

.group-head {
    display: flex;
    align-items: center;
    height: 22px;
    color: #222;
    font-size: 12px;
}

.group-head .btn {
    margin-left: 30px;
    font-size: 12px;
}

.group-foot {
    display: flex;
    align-items: center;
    height: 24px;
}

.group-head .pager,
.group-foot .pager {
    color: #969494;
    font-size: 11px;
}

table {
    width: 100%;
    border-collapse: collapse;
}

thead tr {
    height: 19px;
    background: linear-gradient(#fff, #dedede);
}

th {
    color: #4c4c4c;
    text-align: left;
}

.col-icon {
    width: 24px;
}

th.col-icon:last-child {
    width: 14px;
}

tbody tr {
    height: 24px;
    border-bottom: 1px solid #ddd;
}

tbody tr:nth-child(even) {
    background: #f2f2f2;
}

tbody td {
    white-space: nowrap;
}

td:first-child {
    padding-left: 4px;
}

td svg {
    width: 12px;
    height: 12px;
    margin-bottom: 3px;
}

/* Captions over the windows */
.caption {
    position: absolute;
    z-index: 5;
    color: #f00;
    font-family: "Courier New", "Liberation Mono", monospace;
    font-size: 34px;
    font-weight: bold;
    line-height: 38px;
}

.window-before .caption {
    top: 136px;
    left: 383px;
}

.window-after .caption {
    top: 111px;
    left: 345px;
}
```
